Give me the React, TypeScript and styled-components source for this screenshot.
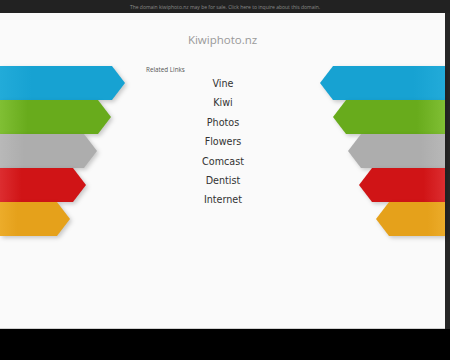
import React from "react";
import styled, { createGlobalStyle } from "styled-components";

const GlobalStyle = createGlobalStyle`
  html, body {
    margin: 0;
    padding: 0;
    background: #000;
  }
  body {
    width: 450px;
    height: 360px;
    overflow: hidden;
    font-family: "Open Sans", "DejaVu Sans", sans-serif;
  }
`;

const Page = styled.div`
  width: 450px;
  height: 360px;
  display: flex;
  flex-direction: column;
  background: #000;
`;

const TopBar = styled.div`
  height: 13px;
  background: #222;
  color: #8a8a8a;
  font-size: 5px;
  display: flex;
  align-items: center;
  justify-content: center;
  padding-left: 0;
`;

const Frame = styled.div`
  display: flex;
  height: 316px;
  background: #262626;
`;

const Main = styled.div`
  width: 445px;
  background: #fafafa;
  border-bottom: 1px solid #d0d0d0;
  display: flex;
  flex-direction: column;
`;

const Title = styled.div`
  text-align: center;
  color: #999;
  font-size: 11.5px;
  font-family: "Open Sans", sans-serif;
  padding-top: 19px;
  height: 34px;
`;

const Body = styled.div`
  display: flex;
`;

const Side = styled.div<{ $right?: boolean }>`
  width: ${(p) => (p.$right ? "145px" : "146px")};
  display: flex;
  flex-direction: column;
  align-items: ${(p) => (p.$right ? "flex-end" : "flex-start")};
`;

const ArrowWrap = styled.div`
  filter: drop-shadow(2px 2px 2px rgba(0, 0, 0, 0.2));
`;

const Arrow = styled.div<{ $w: number; $c: string; $l: string; $right?: boolean }>`
  width: ${(p) => p.$w}px;
  height: 34px;
  background: linear-gradient(
    ${(p) => (p.$right ? "to left" : "to right")},
    ${(p) => p.$l} 0%,
    ${(p) => p.$c} 25%,
    ${(p) => p.$c} 100%
  );
  clip-path: ${(p) =>
    p.$right
      ? "polygon(13px 0, 100% 0, 100% 100%, 13px 100%, 0 50%)"
      : "polygon(0 0, calc(100% - 13px) 0, 100% 50%, calc(100% - 13px) 100%, 0 100%)"};
`;

const Center = styled.div`
  width: 154px;
  display: flex;
  flex-direction: column;
`;

const Heading = styled.div`
  font-size: 6.3px;
  color: #555;
  margin-top: -1px;
  height: 9px;
`;

const LinkList = styled.div`
  display: flex;
  flex-direction: column;
  align-items: center;
`;

const LinkItem = styled.a`
  font-family: "DejaVu Sans", sans-serif;
  font-size: 9.6px;
  color: #333;
  text-decoration: none;
  height: 19.4px;
  line-height: 19.4px;
`;

const Strip = styled.div`
  flex: 1;
  background: #262626;
`;

const colors = [
  { c: "#17a2d2", l: "#22abd9" },
  { c: "#68ab1c", l: "#80bf34" },
  { c: "#adadad", l: "#b8b8b8" },
  { c: "#d01416", l: "#dc2d30" },
  { c: "#e5a11b", l: "#ecac2a" },
];

const leftWidths = [125, 111, 97, 86, 70];
const rightWidths = [125, 112, 97, 86, 69];

const links = ["Vine", "Kiwi", "Photos", "Flowers", "Comcast", "Dentist", "Internet"];

export default function App() {
  return (
    <Page>
      <GlobalStyle />
      <TopBar>
        The domain kiwiphoto.nz may be for sale. Click here to inquire about this domain.
      </TopBar>
      <Frame>
        <Main>
          <Title>Kiwiphoto.nz</Title>
          <Body>
            <Side>
              {colors.map((c, i) => (
                <ArrowWrap key={i}>
                  <Arrow $w={leftWidths[i]} $c={c.c} $l={c.l} />
                </ArrowWrap>
              ))}
            </Side>
            <Center>
              <Heading>Related Links</Heading>
              <LinkList>
                {links.map((l) => (
                  <LinkItem key={l} href="#">
                    {l}
                  </LinkItem>
                ))}
              </LinkList>
            </Center>
            <Side $right>
              {colors.map((c, i) => (
                <ArrowWrap key={i}>
                  <Arrow $right $w={rightWidths[i]} $c={c.c} $l={c.l} />
                </ArrowWrap>
              ))}
            </Side>
          </Body>
        </Main>
        <Strip />
      </Frame>
    </Page>
  );
}
